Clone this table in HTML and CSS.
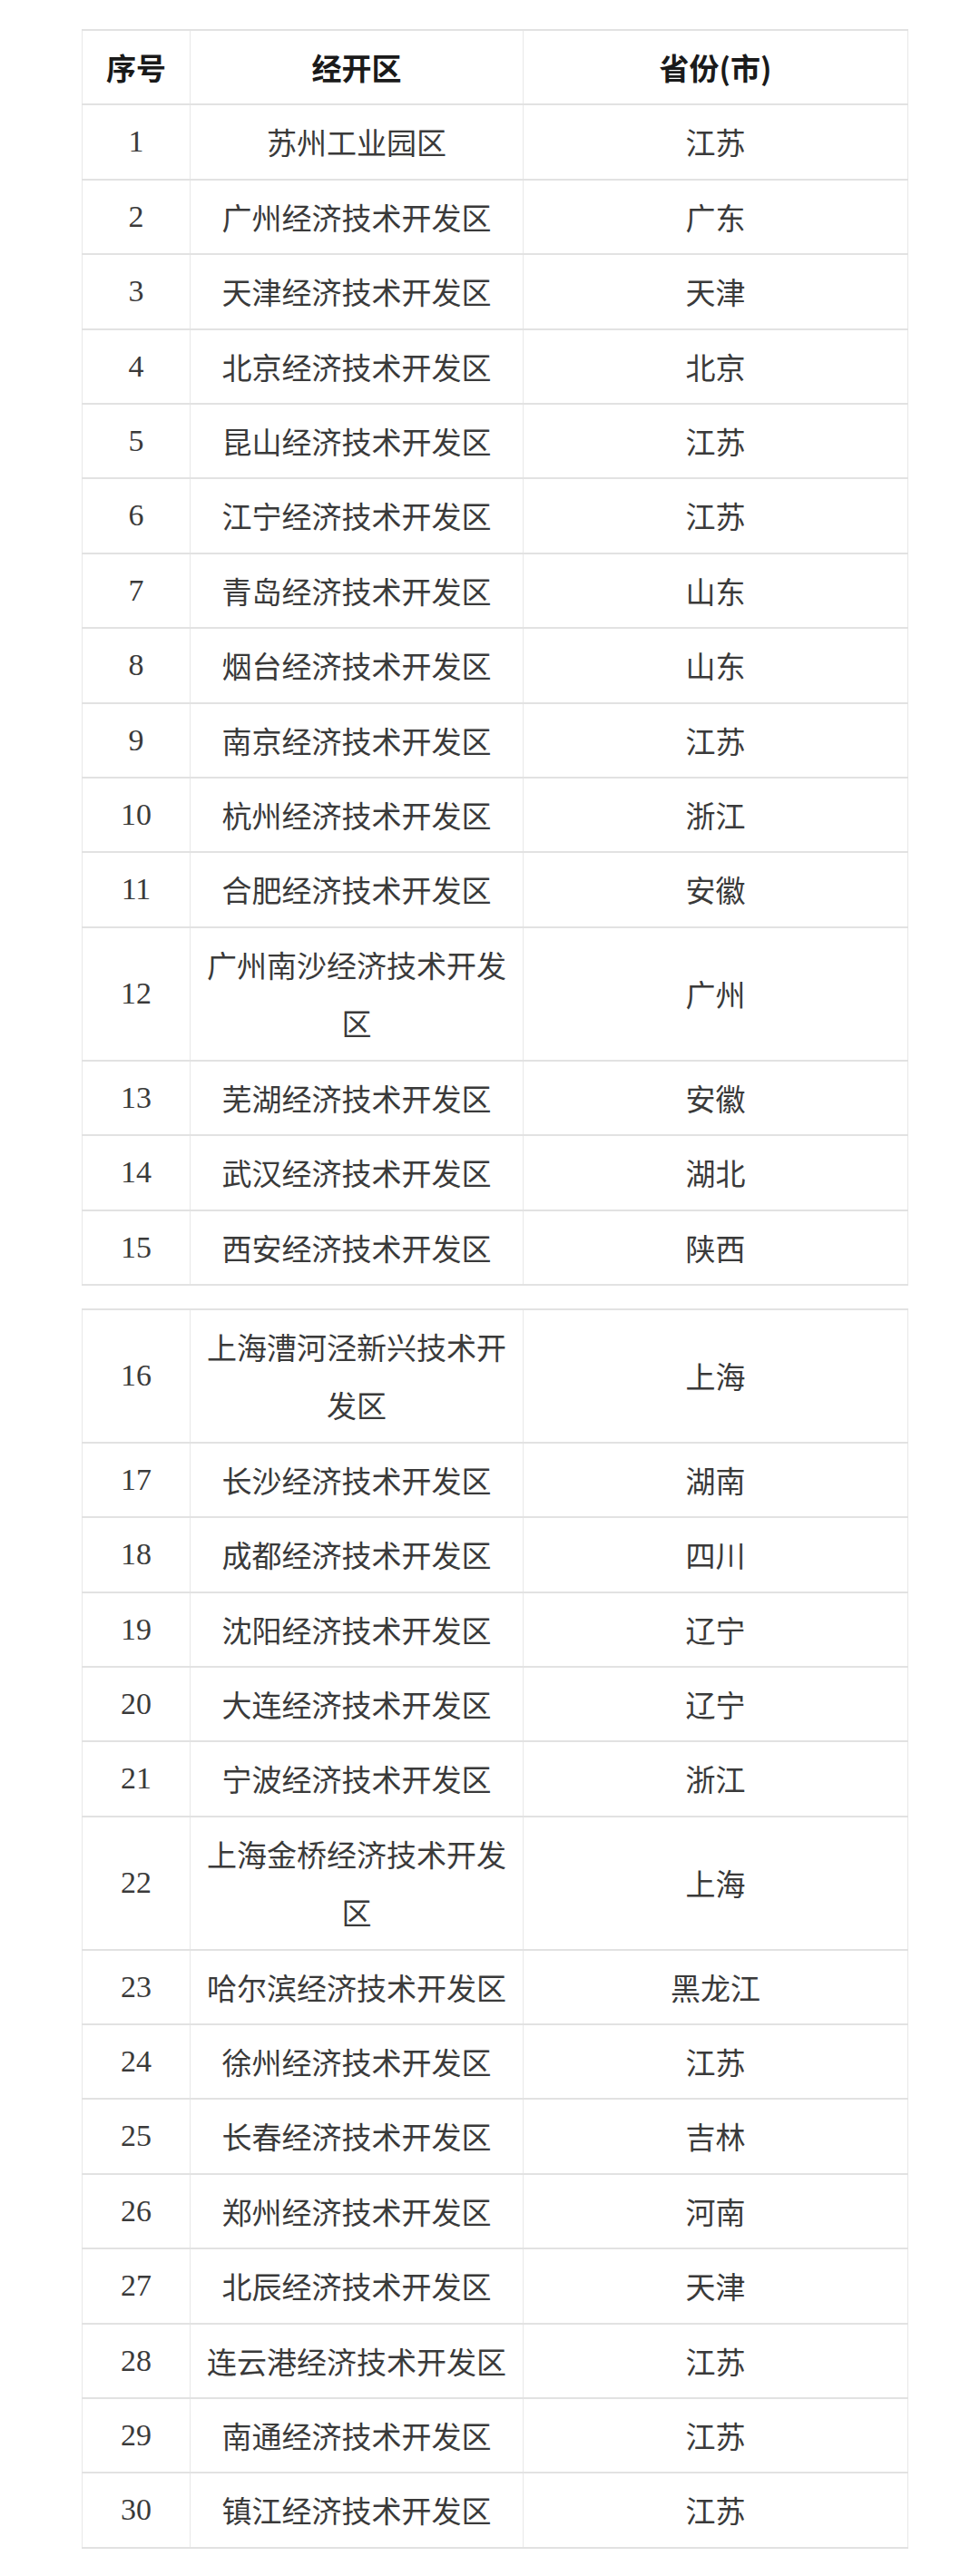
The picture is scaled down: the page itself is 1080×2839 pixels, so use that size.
FILE: index.html
```html
<!DOCTYPE html>
<html lang="zh-CN">
<head>
<meta charset="utf-8">
<title>经开区</title>
<link rel="stylesheet" href="styles.css">
</head>
<body>
<div class="page">
<table class="zone-table">
<colgroup><col class="c-no"><col class="c-name"><col class="c-prov"></colgroup>
<thead>
<tr><th>序号</th><th>经开区</th><th>省份(市)</th></tr>
</thead>
<tbody>
<tr><td>1</td><td>苏州工业园区</td><td>江苏</td></tr>
<tr><td>2</td><td>广州经济技术开发区</td><td>广东</td></tr>
<tr><td>3</td><td>天津经济技术开发区</td><td>天津</td></tr>
<tr><td>4</td><td>北京经济技术开发区</td><td>北京</td></tr>
<tr><td>5</td><td>昆山经济技术开发区</td><td>江苏</td></tr>
<tr><td>6</td><td>江宁经济技术开发区</td><td>江苏</td></tr>
<tr><td>7</td><td>青岛经济技术开发区</td><td>山东</td></tr>
<tr><td>8</td><td>烟台经济技术开发区</td><td>山东</td></tr>
<tr><td>9</td><td>南京经济技术开发区</td><td>江苏</td></tr>
<tr><td>10</td><td>杭州经济技术开发区</td><td>浙江</td></tr>
<tr><td>11</td><td>合肥经济技术开发区</td><td>安徽</td></tr>
<tr><td>12</td><td>广州南沙经济技术开发区</td><td>广州</td></tr>
<tr><td>13</td><td>芜湖经济技术开发区</td><td>安徽</td></tr>
<tr><td>14</td><td>武汉经济技术开发区</td><td>湖北</td></tr>
<tr><td>15</td><td>西安经济技术开发区</td><td>陕西</td></tr>
</tbody>
</table>

<table class="zone-table">
<colgroup><col class="c-no"><col class="c-name"><col class="c-prov"></colgroup>
<tbody>
<tr><td>16</td><td>上海漕河泾新兴技术开发区</td><td>上海</td></tr>
<tr><td>17</td><td>长沙经济技术开发区</td><td>湖南</td></tr>
<tr><td>18</td><td>成都经济技术开发区</td><td>四川</td></tr>
<tr><td>19</td><td>沈阳经济技术开发区</td><td>辽宁</td></tr>
<tr><td>20</td><td>大连经济技术开发区</td><td>辽宁</td></tr>
<tr><td>21</td><td>宁波经济技术开发区</td><td>浙江</td></tr>
<tr><td>22</td><td>上海金桥经济技术开发区</td><td>上海</td></tr>
<tr><td>23</td><td>哈尔滨经济技术开发区</td><td>黑龙江</td></tr>
<tr><td>24</td><td>徐州经济技术开发区</td><td>江苏</td></tr>
<tr><td>25</td><td>长春经济技术开发区</td><td>吉林</td></tr>
<tr><td>26</td><td>郑州经济技术开发区</td><td>河南</td></tr>
<tr><td>27</td><td>北辰经济技术开发区</td><td>天津</td></tr>
<tr><td>28</td><td>连云港经济技术开发区</td><td>江苏</td></tr>
<tr><td>29</td><td>南通经济技术开发区</td><td>江苏</td></tr>
<tr><td>30</td><td>镇江经济技术开发区</td><td>江苏</td></tr>
</tbody>
</table>
</div>
</body>
</html>
```

FILE: styles.css
```css
html, body {
  margin: 0;
  padding: 0;
  background: #ffffff;
}

.page {
  padding: 32px 0 0 90px;
  display: flex;
  flex-direction: column;
  gap: 25px;
}

.zone-table {
  width: 910px;
  border-collapse: collapse;
  table-layout: fixed;
  font-family: "Liberation Serif", "Noto Sans CJK SC", serif;
  font-size: 33px;
  line-height: 64.4px;
  color: #3a3a3a;
}

.c-no { width: 119px; }
.c-name { width: 367px; }
.c-prov { width: 424px; }

.zone-table th,
.zone-table td {
  padding: 8px 12px;
  text-align: center;
  vertical-align: middle;
  border-left: 1px solid #e8e8e8;
  border-right: 1px solid #e8e8e8;
  border-top: 2px solid #e2e2e2;
  border-bottom: 2px solid #e2e2e2;
}

.zone-table td:first-child {
  font-size: 34px;
}

.zone-table th {
  font-family: "Noto Sans CJK SC", sans-serif;
  font-weight: 700;
  color: #1a1a1a;
}

.zone-table td:nth-child(2),
.zone-table td:nth-child(3) {
  font-family: "Noto Sans CJK SC", sans-serif;
}
```
